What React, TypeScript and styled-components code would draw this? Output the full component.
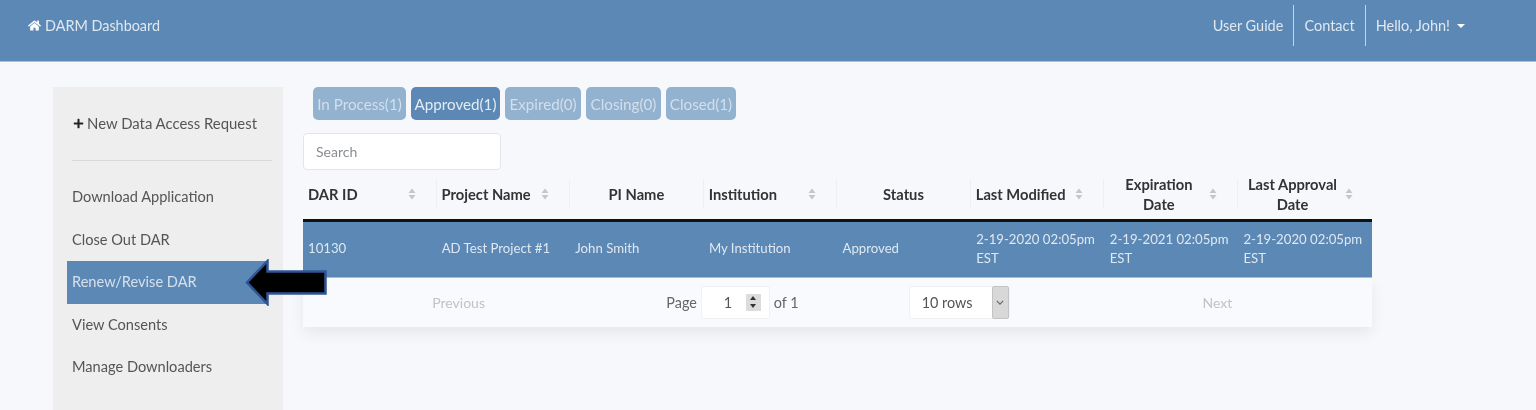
import styled, { createGlobalStyle } from 'styled-components'
import { FaHome, FaPlus } from 'react-icons/fa'

const GlobalStyle = createGlobalStyle`
  html, body {
    margin: 0;
    padding: 0;
    height: 100%;
    overflow: hidden;
    background: #f7f8fc;
  }
  * {
    box-sizing: border-box;
  }
`

const menuItems = [
  'Download Application',
  'Close Out DAR',
  'Renew/Revise DAR',
  'View Consents',
  'Manage Downloaders',
]

const tabs = [
  { label: 'In Process(1)', width: 93 },
  { label: 'Approved(1)', width: 89, active: true },
  { label: 'Expired(0)', width: 76 },
  { label: 'Closing(0)', width: 75 },
  { label: 'Closed(1)', width: 70 },
]

const columns = [
  { title: ['DAR ID'], align: 'left', sort: true },
  { title: ['Project Name'], align: 'left', sort: true },
  { title: ['PI Name'], align: 'center' },
  { title: ['Institution'], align: 'left', sort: true },
  { title: ['Status'], align: 'center' },
  { title: ['Last Modified'], align: 'left', sort: true },
  { title: ['Expiration', 'Date'], align: 'center', sort: true },
  { title: ['Last Approval', 'Date'], align: 'center', sort: true },
]

const row = [
  '10130',
  'AD Test Project #1',
  'John Smith',
  'My Institution',
  'Approved',
  '2-19-2020 02:05pm EST',
  '2-19-2021 02:05pm EST',
  '2-19-2020 02:05pm EST',
]

const SortIcon = () => (
  <SortSvg viewBox="0 0 8 12" width="8" height="12">
    <path d="M4 0.5 L7.5 5 H0.5 Z M4 11.5 L0.5 7 H7.5 Z" fill="#c3c6ca" />
  </SortSvg>
)

const App = () => {
  return (
    <Page>
      <GlobalStyle />
      <Header>
        <Brand>
          <FaHome size={13} color="#fff" />
          DARM Dashboard
        </Brand>
        <Nav>
          <NavLink>User Guide</NavLink>
          <NavLink divided>Contact</NavLink>
          <NavLink divided>
            Hello, John!
            <Caret />
          </NavLink>
        </Nav>
      </Header>
      <Content>
        <Sidebar>
          <NewRequest>
            <FaPlus size={11} color="#222" />
            New Data Access Request
          </NewRequest>
          <Divider />
          <Menu>
            {menuItems.map(item => (
              <MenuItem key={item} active={item === 'Renew/Revise DAR'}>
                {item}
              </MenuItem>
            ))}
          </Menu>
          <ArrowSvg viewBox="0 0 82 47" width="82" height="47">
            <path
              d="M2 23.5 L22.5 2 V12.5 H80.5 V34.5 H22.5 V45 Z"
              fill="#000"
              stroke="#2f5597"
              strokeWidth="2.5"
            />
          </ArrowSvg>
        </Sidebar>
        <Main>
          <Tabs>
            {tabs.map(tab => (
              <Tab key={tab.label} active={tab.active} tabWidth={tab.width}>
                {tab.label}
              </Tab>
            ))}
          </Tabs>
          <Search placeholder="Search" />
          <Table>
            <HeadRow>
              {columns.map(col => (
                <HeadCell key={col.title[0]} align={col.align}>
                  <HeadTitle>
                    {col.title.map(line => (
                      <span key={line}>{line}</span>
                    ))}
                  </HeadTitle>
                  {col.sort && <SortIcon />}
                </HeadCell>
              ))}
            </HeadRow>
            <BodyRow>
              {row.map((cell, index) => (
                <BodyCell key={index}>{cell}</BodyCell>
              ))}
            </BodyRow>
            <Pagination>
              <PageButton side="left">Previous</PageButton>
              <PageCenter>
                <PageInfo>
                  Page
                  <PageInput>
                    1
                    <Spinner>
                      <SpinUp />
                      <SpinDown />
                    </Spinner>
                  </PageInput>
                  of 1
                </PageInfo>
                <RowsSelect>
                  10 rows
                  <SelectArrow>
                    <svg viewBox="0 0 10 6" width="8" height="5">
                      <path d="M1 1 L5 5 L9 1" fill="none" stroke="#666" strokeWidth="1.4" />
                    </svg>
                  </SelectArrow>
                </RowsSelect>
              </PageCenter>
              <PageButton side="right">Next</PageButton>
            </Pagination>
          </Table>
        </Main>
      </Content>
    </Page>
  )
}

export default App

const Page = styled.div`
  height: 410px;
  overflow: hidden;
  background: #f7f8fc;
  font-family: Lato, 'Open Sans', sans-serif;
  font-size: 14px;
  color: #555;
  filter: blur(0.7px);
`

const Header = styled.header`
  height: 62px;
  background: #5b88b5;
  border-bottom: 1px solid #a9c2da;
  display: flex;
  align-items: center;
  justify-content: space-between;
  padding: 0 61px 11px 28px;
  color: #dfe8f1;
`

const Brand = styled.div`
  display: flex;
  align-items: center;
  gap: 4px;
  font-size: 14.4px;
`

const Nav = styled.nav`
  display: flex;
  align-items: center;
  margin-top: 1px;
`

const NavLink = styled.div<{ divided?: boolean }>`
  display: flex;
  align-items: center;
  height: 41px;
  padding: 0 10px;
  font-size: 14.5px;
  border-left: ${props => (props.divided ? '1.5px solid #c5d5e5' : 'none')};
`

const Caret = styled.span`
  margin-left: 7px;
  border-left: 4px solid transparent;
  border-right: 4px solid transparent;
  border-top: 4px solid #fff;
`

const Content = styled.div`
  display: flex;
  padding: 25px 0 0 53px;
  gap: 20px;
`

const Sidebar = styled.aside`
  position: relative;
  width: 230px;
  height: 340px;
  background: #eeeeee;
  padding: 17px 14px 0;
  flex-shrink: 0;
`

const NewRequest = styled.div`
  display: flex;
  align-items: center;
  gap: 3px;
  height: 38px;
  padding-left: 6px;
  font-size: 14.9px;
  color: #555;
`

const Divider = styled.div`
  margin: 18px 0 15px 5px;
  width: 200px;
  height: 1px;
  background: #d9d9d9;
`

const Menu = styled.div`
  display: flex;
  flex-direction: column;
`

const MenuItem = styled.div<{ active?: boolean }>`
  display: flex;
  align-items: center;
  height: 42.5px;
  padding: 0 0 1px 5px;
  width: 201px;
  font-size: 14.6px;
  background: ${props => (props.active ? '#5b88b5' : 'transparent')};
  color: ${props => (props.active ? '#d5e0ec' : '#555')};
`

const ArrowSvg = styled.svg`
  position: absolute;
  left: 192px;
  top: 172px;
`

const Main = styled.main`
  width: 1069px;
  display: flex;
  flex-direction: column;
`

const Tabs = styled.div`
  display: flex;
  gap: 5px;
  padding-left: 10px;
`

const Tab = styled.div<{ active?: boolean; tabWidth: number }>`
  width: ${props => props.tabWidth}px;
  height: 33px;
  display: flex;
  align-items: center;
  justify-content: center;
  border-radius: 5px;
  font-size: 15.2px;
  white-space: nowrap;
  color: ${props => (props.active ? '#e4ebf3' : '#d3dfeb')};
  background: ${props => (props.active ? '#5b88b5' : '#93b2d0')};
`

const Search = styled.input`
  width: 198px;
  height: 37px;
  margin-top: 13px;
  padding: 0 12px;
  border: 1px solid #e3e5ea;
  border-radius: 4px;
  background: #fff;
  font-family: inherit;
  font-size: 14px;

  &::placeholder {
    color: #8a8d91;
    opacity: 1;
  }
`

const Table = styled.div`
  margin-top: 9px;
`

const HeadRow = styled.div`
  display: grid;
  grid-template-columns: repeat(8, 1fr);
  grid-template-rows: 30px;
  height: 43px;
  border-bottom: 3px solid #111;
  padding-bottom: 10px;
`

const HeadCell = styled.div<{ align: string }>`
  display: flex;
  align-items: center;
  justify-content: ${props => (props.align === 'center' ? 'center' : 'space-between')};
  gap: 8px;
  padding: 0 ${props => (props.align === 'center' ? '5px' : '20px')} 0 5px;
  border-right: 1px solid #eff0f3;
  font-size: 14.7px;
  font-weight: 700;
  color: #333;
  line-height: 20px;

  &:nth-child(7) {
    justify-content: space-between;
    padding: 0 20px 0 21px;
  }

  &:last-child {
    justify-content: space-between;
    border-right: none;
    padding: 0 19px 0 10px;
  }
`

const HeadTitle = styled.div`
  display: flex;
  flex-direction: column;
  align-items: center;
  white-space: nowrap;
`

const SortSvg = styled.svg`
  flex-shrink: 0;
`

const BodyRow = styled.div`
  display: grid;
  grid-template-columns: repeat(8, 1fr);
  height: 56px;
  background: #5b88b5;
  border-bottom: 1px solid #a9c2da;
`

const BodyCell = styled.div`
  display: flex;
  align-items: center;
  padding: 0 5px 1px;
  font-size: 13.2px;
  line-height: 19.5px;
  color: #dfe8f1;
`

const Pagination = styled.div`
  display: grid;
  grid-template-columns: 1fr 2fr 1fr;
  align-items: center;
  height: 49px;
  padding-bottom: 1px;
  background: #f9fafd;
  box-shadow: 0 6px 14px rgba(0, 0, 0, 0.07);
`

const PageButton = styled.div<{ side: string }>`
  text-align: center;
  font-size: 14px;
  color: #c0c2c5;
  padding-left: ${props => (props.side === 'left' ? '44px' : '0')};
  padding-right: ${props => (props.side === 'right' ? '42px' : '0')};
`

const PageCenter = styled.div`
  display: flex;
  align-items: center;
  justify-content: center;
  gap: 110px;
  padding-left: 1px;
`

const PageInfo = styled.div`
  display: flex;
  align-items: center;
  gap: 4px;
  font-size: 14.4px;
  color: #666;
`

const PageInput = styled.div`
  display: flex;
  align-items: center;
  justify-content: space-between;
  width: 69px;
  height: 33px;
  padding: 0 8px 0 22px;
  background: #fff;
  border: 1px solid #f0f1f4;
  border-radius: 3px;
  color: #555;
`

const Spinner = styled.div`
  display: flex;
  flex-direction: column;
  align-items: center;
  justify-content: space-around;
  width: 15px;
  height: 17px;
  background: #dcdcdc;
`

const SpinUp = styled.span`
  border-left: 3px solid transparent;
  border-right: 3px solid transparent;
  border-bottom: 4px solid #333;
`

const SpinDown = styled.span`
  border-left: 3px solid transparent;
  border-right: 3px solid transparent;
  border-top: 4px solid #333;
`

const RowsSelect = styled.div`
  display: flex;
  align-items: center;
  justify-content: space-between;
  width: 101px;
  height: 33px;
  padding-left: 12px;
  background: #fff;
  border: 1px solid #f0f1f4;
  border-radius: 3px;
  color: #555;
  font-size: 14.4px;
`

const SelectArrow = styled.div`
  display: flex;
  align-items: center;
  justify-content: center;
  width: 17px;
  height: 33px;
  background: #d8d8d8;
  border: 1px solid #c4c4c4;
  border-radius: 2px;
`
